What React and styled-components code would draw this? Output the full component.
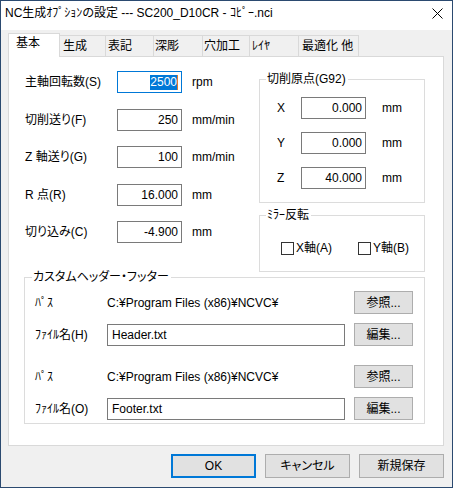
import React from "react";
import styled, { createGlobalStyle } from "styled-components";

const Global = createGlobalStyle`
  html, body { margin: 0; padding: 0; background: #f0f0f0; }
  body {
    font-family: "Liberation Sans", "Noto Sans CJK JP", sans-serif;
    font-size: 12px;
    color: #000;
    font-feature-settings: "palt";
  }
  * { box-sizing: border-box; }
`;

const Window = styled.div`
  width: 453px;
  height: 488px;
  border: 1px solid #2b4a70;
  background: #f0f0f0;
  display: flex;
  flex-direction: column;
  overflow: hidden;
`;

const TitleBar = styled.div`
  height: 29px;
  flex: none;
  background: #fff;
  display: flex;
  align-items: flex-start;
  justify-content: space-between;
  padding: 4px 9px 0 4px;
  line-height: 16px;
  white-space: nowrap;
`;

const CloseIcon = styled.svg`
  margin-top: 3px;
  display: block;
`;

const Body = styled.div`
  flex: 1;
  display: flex;
  flex-direction: column;
  padding: 3px 8px 0 7px;
`;

const TabStrip = styled.div`
  display: flex;
  align-items: flex-end;
  height: 24px;
  margin-bottom: -1px;
  position: relative;
  z-index: 2;
`;

const Tab = styled.div`
  width: ${(p) => p.$w}px;
  height: ${(p) => (p.$active ? 24 : 21)}px;
  margin-bottom: ${(p) => (p.$active ? 0 : 1)}px;
  margin-left: ${(p) => (p.$first ? 0 : -1)}px;
  border: 1px solid #d9d9d9;
  border-bottom: none;
  background: ${(p) => (p.$active ? "#fff" : "#f0f0f0")};
  padding-left: ${(p) => p.$pad}px;
  padding-top: ${(p) => (p.$active ? 1 : 0)}px;
  display: flex;
  align-items: ${(p) => (p.$active ? "flex-start" : "center")};
  line-height: 16px;
  white-space: nowrap;
  position: relative;
  z-index: ${(p) => (p.$active ? 2 : 1)};
`;

const Panel = styled.div`
  height: 390px;
  flex: none;
  border: 1px solid #d9d9d9;
  background: #fff;
  padding: 14px 18px 0 15px;
  display: flex;
  flex-direction: column;
  position: relative;
  z-index: 1;
`;

const TopSection = styled.div`
  display: flex;
  justify-content: space-between;
  align-items: flex-start;
`;

const LeftCol = styled.div`
  display: flex;
  flex-direction: column;
  gap: 15.5px;
  padding-left: 1px;
`;

const FieldRow = styled.div`
  display: grid;
  grid-template-columns: 92px 65px auto;
  align-items: center;
  height: 22px;
  white-space: nowrap;
`;

const Label = styled.span`
  white-space: nowrap;
  line-height: 16px;
`;

const Unit = styled.span`
  white-space: nowrap;
  line-height: 16px;
  padding-left: ${(p) => p.$gap}px;
`;

const TextBox = styled.div`
  height: 22px;
  border: 1px solid ${(p) => (p.$focus ? "#0078d7" : "#7a7a7a")};
  background: #fff;
  display: flex;
  align-items: center;
  justify-content: ${(p) => (p.$left ? "flex-start" : "flex-end")};
  padding: ${(p) => (p.$left ? "0 4px" : "0 3px 0 4px")};
  white-space: nowrap;
  overflow: hidden;
  line-height: 16px;
`;

const Selected = styled.span`
  background: #0078d7;
  color: #fff;
  line-height: 15px;
`;

const Caret = styled.span`
  width: 1px;
  height: 15px;
  background: #e07a2a;
`;

const RightCol = styled.div`
  width: 166px;
  padding-top: 8px;
  display: flex;
  flex-direction: column;
`;

const Group = styled.div`
  position: relative;
  border: 1px solid #dcdcdc;
  padding: ${(p) => p.$pad};
  margin-top: ${(p) => p.$mt || 0}px;
`;

const GroupTitle = styled.span`
  position: absolute;
  top: -8px;
  left: ${(p) => p.$left || 6}px;
  padding: 0 2px 0 1px;
  background: #fff;
  line-height: 14px;
  white-space: nowrap;
`;

const OriginGrid = styled.div`
  display: grid;
  grid-template-columns: 24px 65px auto;
  row-gap: 13px;
  align-items: center;
  grid-auto-rows: 22px;
`;

const CheckRow = styled.div`
  display: grid;
  grid-template-columns: 77px auto;
  height: 13px;
  align-items: center;
`;

const CheckItem = styled.label`
  display: flex;
  align-items: center;
  gap: 2px;
  white-space: nowrap;
  line-height: 14px;
`;

const CheckBox = styled.span`
  width: 13px;
  height: 13px;
  border: 1px solid #333;
  background: #fff;
  flex: none;
`;

const CustomGroup = styled(Group)`
  display: flex;
  flex-direction: column;
`;

const HFRow = styled.div`
  display: grid;
  grid-template-columns: 72px 238px 68px;
  align-items: center;
  height: 23px;
  margin-top: ${(p) => p.$mt || 0}px;
  white-space: nowrap;
`;

const SmallButton = styled.div`
  width: 59px;
  height: 23px;
  justify-self: end;
  border: 1px solid #adadad;
  background: #e1e1e1;
  display: flex;
  align-items: center;
  justify-content: center;
  line-height: 16px;
`;

const ButtonRow = styled.div`
  display: flex;
  justify-content: flex-end;
  gap: 9px;
  margin-top: 8px;
`;

const DialogButton = styled.div`
  width: 85px;
  height: 24px;
  border: ${(p) => (p.$default ? "2px solid #0078d7" : "1px solid #adadad")};
  background: #e1e1e1;
  display: flex;
  align-items: center;
  justify-content: center;
  line-height: 16px;
  white-space: nowrap;
`;

const tabs = [
  { t: "基本", w: 52, pad: 7, active: true },
  { t: "生成", w: 47, pad: 3 },
  { t: "表記", w: 49, pad: 2 },
  { t: "深彫", w: 50, pad: 1 },
  { t: "穴加工", w: 48, pad: 1 },
  { t: "ﾚｲﾔ", w: 50, pad: 2 },
  { t: "最適化 他", w: 61, pad: 3 },
];

const fields = [
  { label: "主軸回転数(S)", value: "2500", unit: "rpm", focus: true },
  { label: "切削送り(F)", value: "250", unit: "mm/min" },
  { label: "Z 軸送り(G)", value: "100", unit: "mm/min" },
  { label: "R 点(R)", value: "16.000", unit: "mm" },
  { label: "切り込み(C)", value: "-4.900", unit: "mm" },
];

const origin = [
  { label: "X", value: "0.000" },
  { label: "Y", value: "0.000" },
  { label: "Z", value: "40.000" },
];

export default function App() {
  return (
    <>
      <Global />
      <Window>
        <TitleBar>
          <span>NC生成ｵﾌﾟｼｮﾝの設定 --- SC200_D10CR - ｺﾋﾟｰ.nci</span>
          <CloseIcon width="11" height="11" viewBox="0 0 11 11">
            <path d="M0.5 0.5 L10.5 10.5 M10.5 0.5 L0.5 10.5" stroke="#000" strokeWidth="1" fill="none" />
          </CloseIcon>
        </TitleBar>
        <Body>
          <TabStrip>
            {tabs.map((t, i) => (
              <Tab key={t.t} $w={t.w} $pad={t.pad} $active={t.active} $first={i === 0}>
                {t.t}
              </Tab>
            ))}
          </TabStrip>
          <Panel>
            <TopSection>
              <LeftCol>
                {fields.map((f) => (
                  <FieldRow key={f.label}>
                    <Label>{f.label}</Label>
                    <TextBox $focus={f.focus}>
                      {f.focus ? (
                        <>
                          <Selected>{f.value}</Selected>
                          <Caret />
                        </>
                      ) : (
                        f.value
                      )}
                    </TextBox>
                    <Unit $gap={10}>{f.unit}</Unit>
                  </FieldRow>
                ))}
              </LeftCol>
              <RightCol>
                <Group $pad="17px 0 13px 17px">
                  <GroupTitle>切削原点(G92)</GroupTitle>
                  <OriginGrid>
                    {origin.map((o) => (
                      <React.Fragment key={o.label}>
                        <Label>{o.label}</Label>
                        <TextBox>{o.value}</TextBox>
                        <Unit $gap={16}>mm</Unit>
                      </React.Fragment>
                    ))}
                  </OriginGrid>
                </Group>
                <Group $pad="25px 0 17px 21px" $mt={12}>
                  <GroupTitle>ﾐﾗｰ反転</GroupTitle>
                  <CheckRow>
                    <CheckItem>
                      <CheckBox />
                      X軸(A)
                    </CheckItem>
                    <CheckItem>
                      <CheckBox />
                      Y軸(B)
                    </CheckItem>
                  </CheckRow>
                </Group>
              </RightCol>
            </TopSection>
            <CustomGroup $pad="13px 11px 3px 10px" $mt={5}>
              <GroupTitle $left={7}>カスタムヘッダー・フッター</GroupTitle>
              <HFRow>
                <Label>ﾊﾟｽ</Label>
                <Label>C:¥Program Files (x86)¥NCVC¥</Label>
                <SmallButton>参照...</SmallButton>
              </HFRow>
              <HFRow $mt={9}>
                <Label>ﾌｧｲﾙ名(H)</Label>
                <TextBox $left>Header.txt</TextBox>
                <SmallButton>編集...</SmallButton>
              </HFRow>
              <HFRow $mt={19}>
                <Label>ﾊﾟｽ</Label>
                <Label>C:¥Program Files (x86)¥NCVC¥</Label>
                <SmallButton>参照...</SmallButton>
              </HFRow>
              <HFRow $mt={9}>
                <Label>ﾌｧｲﾙ名(O)</Label>
                <TextBox $left>Footer.txt</TextBox>
                <SmallButton>編集...</SmallButton>
              </HFRow>
            </CustomGroup>
          </Panel>
          <ButtonRow>
            <DialogButton $default>OK</DialogButton>
            <DialogButton>キャンセル</DialogButton>
            <DialogButton>新規保存</DialogButton>
          </ButtonRow>
        </Body>
      </Window>
    </>
  );
}
